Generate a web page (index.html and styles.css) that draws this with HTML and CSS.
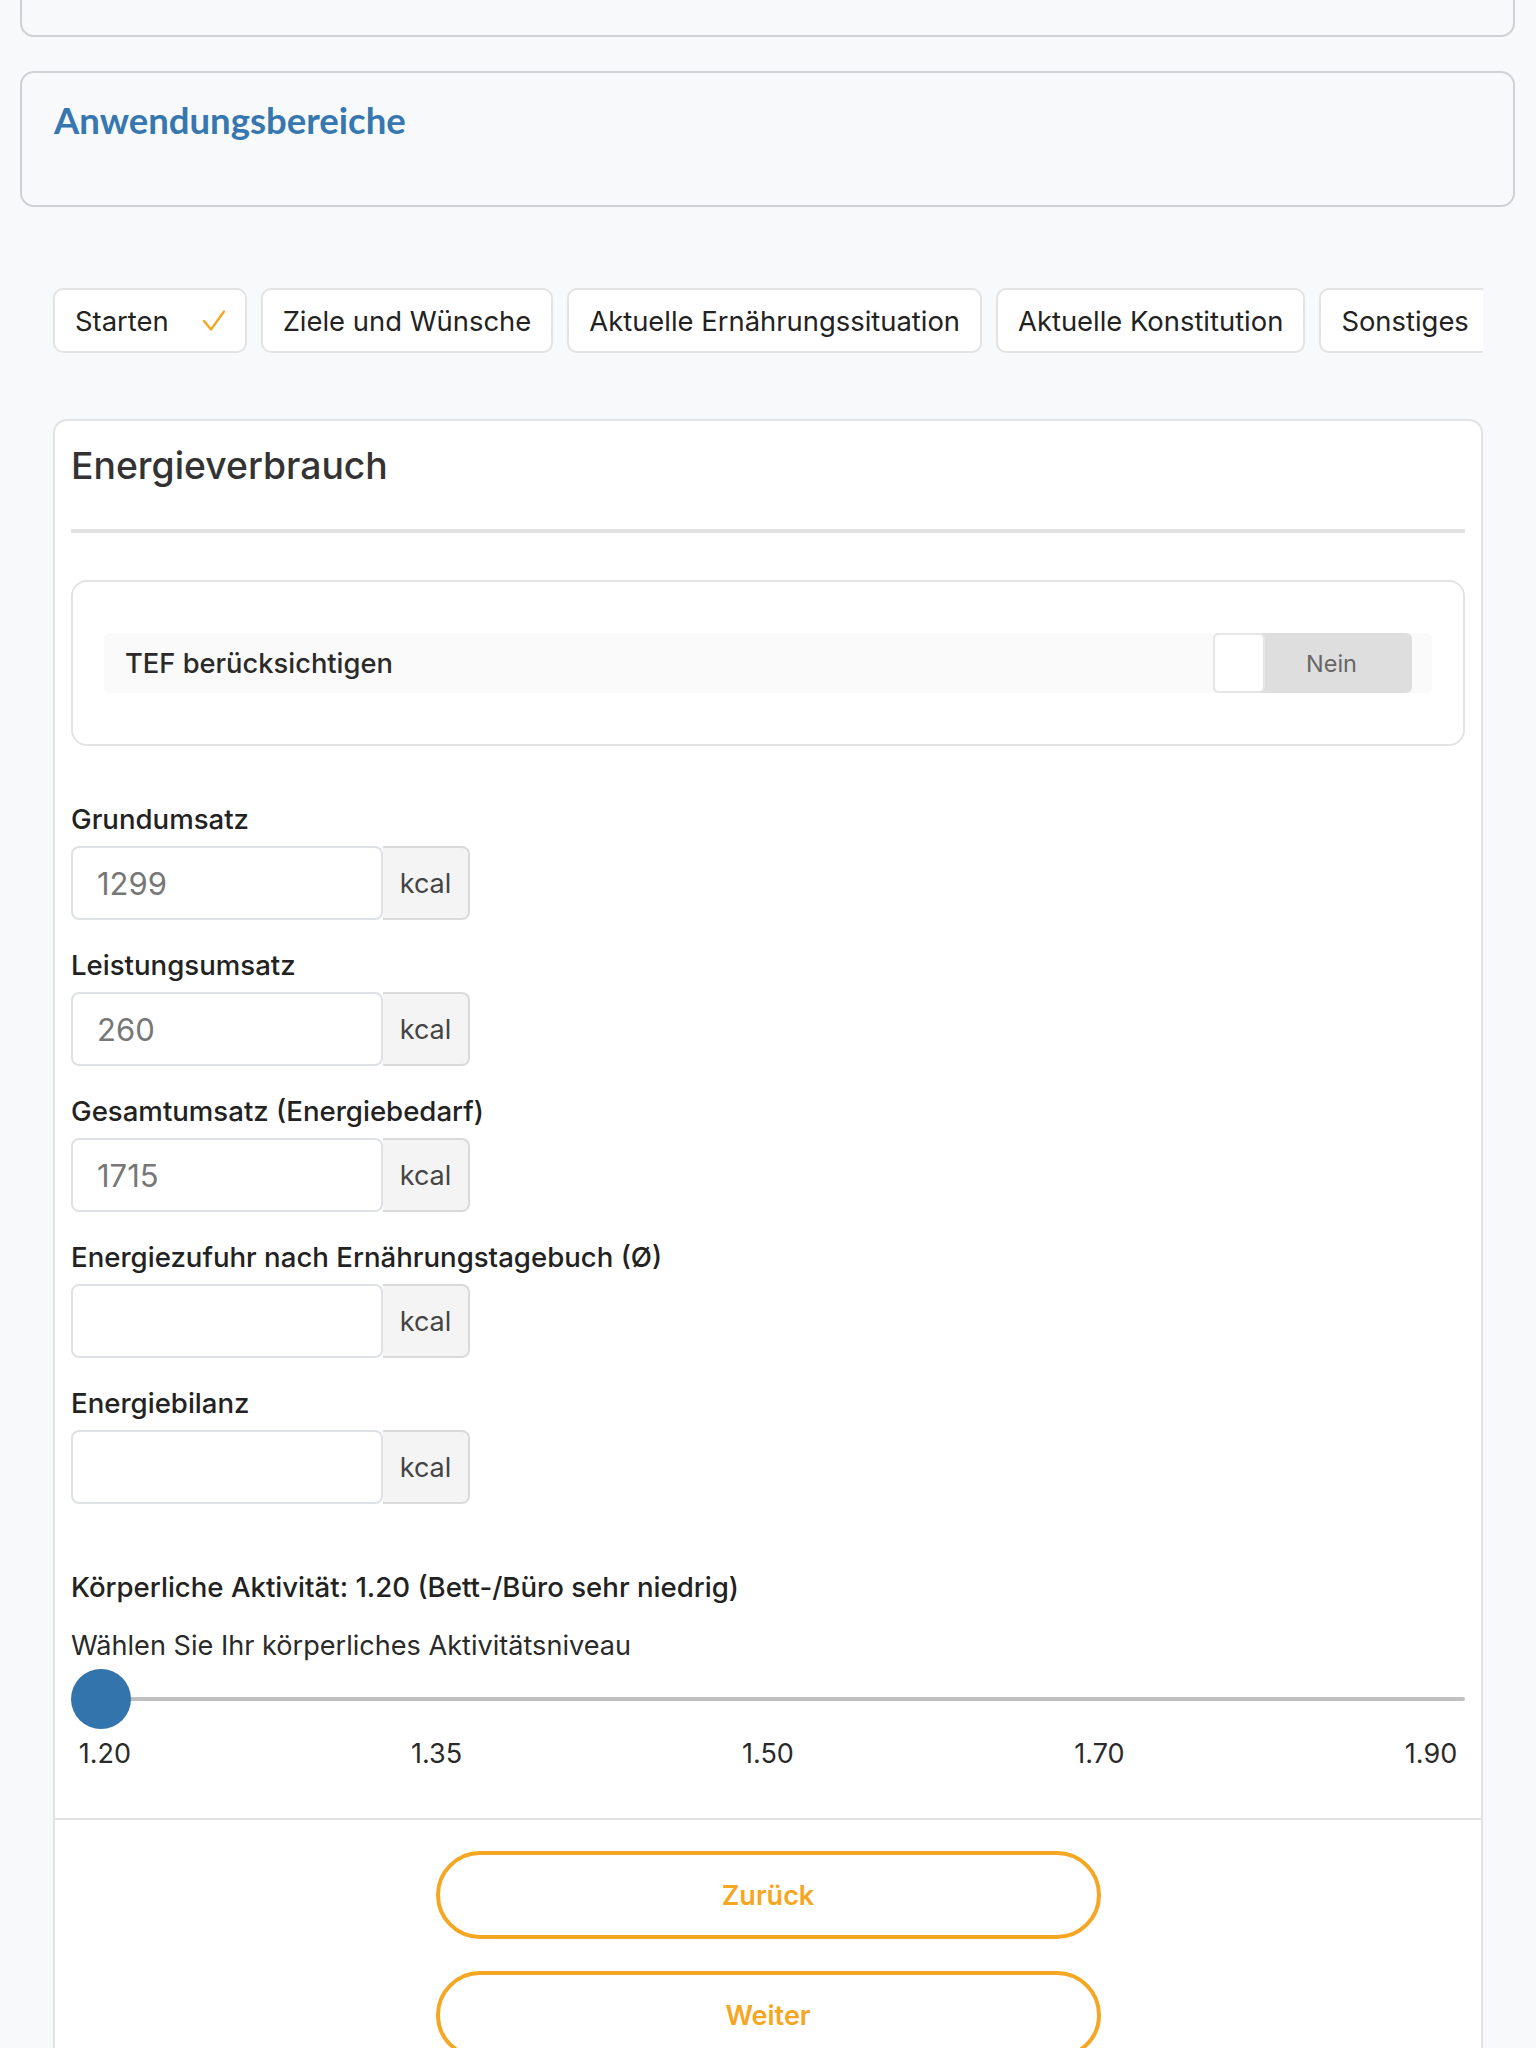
FILE: index.html
```html
<!DOCTYPE html>
<html lang="de">
<head>
    <meta charset="UTF-8">
    <meta name="viewport" content="width=device-width, initial-scale=1.0">
    <title>Ernährungsberatung – Energieverbrauch</title>
    <link rel="stylesheet" href="styles.css">
</head>
<body>
    <div class="page">
        <section class="panel panel-prev"></section>

        <section class="panel panel-areas">
            <h2 class="panel-title">Anwendungsbereiche</h2>
        </section>

        <div class="wizard">
            <nav class="steps">
                <button class="step done">Starten
                    <svg class="check" width="22" height="21" viewBox="0 0 22 21"><polyline points="1,11 8,19.5 21,1.5" fill="none" stroke="#f5a623" stroke-width="2.4" stroke-linecap="round" stroke-linejoin="round"/></svg>
                </button>
                <button class="step">Ziele und Wünsche</button>
                <button class="step">Aktuelle Ernährungssituation</button>
                <button class="step">Aktuelle Konstitution</button>
                <button class="step">Sonstiges</button>
            </nav>

            <div class="step-card">
                <div class="step-body">
                    <h3 class="step-title">Energieverbrauch</h3>

                    <div class="option-box">
                        <div class="option-row">
                            <span class="option-label">TEF berücksichtigen</span>
                            <div class="toggle">
                                <span class="toggle-knob"></span>
                                <span class="toggle-text">Nein</span>
                            </div>
                        </div>
                    </div>

                    <div class="fields">
                        <div class="field">
                            <label for="bmr">Grundumsatz</label>
                            <div class="input-group">
                                <input id="bmr" type="text" value="1299" readonly>
                                <span class="addon">kcal</span>
                            </div>
                        </div>

                        <div class="field">
                            <label for="pal">Leistungsumsatz</label>
                            <div class="input-group">
                                <input id="pal" type="text" value="260" readonly>
                                <span class="addon">kcal</span>
                            </div>
                        </div>

                        <div class="field">
                            <label for="total">Gesamtumsatz (Energiebedarf)</label>
                            <div class="input-group">
                                <input id="total" type="text" value="1715" readonly>
                                <span class="addon">kcal</span>
                            </div>
                        </div>

                        <div class="field">
                            <label for="intake">Energiezufuhr nach Ernährungstagebuch (Ø)</label>
                            <div class="input-group">
                                <input id="intake" type="text">
                                <span class="addon">kcal</span>
                            </div>
                        </div>

                        <div class="field">
                            <label for="balance">Energiebilanz</label>
                            <div class="input-group">
                                <input id="balance" type="text">
                                <span class="addon">kcal</span>
                            </div>
                        </div>
                    </div>

                    <div class="activity">
                        <p class="activity-value">Körperliche Aktivität: 1.20 (Bett-/Büro sehr niedrig)</p>
                        <p class="activity-hint">Wählen Sie Ihr körperliches Aktivitätsniveau</p>
                        <input class="slider" type="range" min="0" max="4" step="1" value="0">
                        <div class="ticks">
                            <span>1.20</span>
                            <span>1.35</span>
                            <span>1.50</span>
                            <span>1.70</span>
                            <span>1.90</span>
                        </div>
                    </div>
                </div>

                <div class="step-footer">
                    <button class="btn-outline">Zurück</button>
                    <button class="btn-outline">Weiter</button>
                </div>
            </div>
        </div>
    </div>
</body>
</html>
```

FILE: styles.css
```css
body {
    margin: 0;
    background: #f8f9fa;
    font-family: Inter, "Liberation Sans", sans-serif;
    color: #222;
}
.page {
    padding: 0 21px 40px 20px;
}

/* collapsible sections above the wizard */
.panel {
    background: #f8f9fa;
    border: 2px solid #cfd1d4;
    border-radius: 14px;
}
.panel-prev {
    height: 98px;
    margin-top: -65px;
}
.panel-areas {
    margin-top: 34px;
    height: 75px;
    padding: 27px 32px 30px;
}
.panel-title {
    margin: 0;
    font-family: Lato, sans-serif;
    font-size: 36.5px;
    line-height: 40px;
    font-weight: 700;
    color: #3777b0;
}

/* wizard */
.wizard {
    margin: 81px 32px 0 33px;
}
.steps {
    display: flex;
    gap: 14px;
    overflow: hidden;
}
.step {
    flex-shrink: 0;
    display: flex;
    align-items: center;
    height: 65px;
    padding: 0 20px;
    background: #fff;
    border: 2px solid #e3e3e3;
    border-radius: 10px;
    font-family: inherit;
    font-size: 27.4px;
    color: #222;
    white-space: nowrap;
}
.step .check {
    margin-left: 34px;
}

.step-card {
    margin-top: 66px;
    background: #fff;
    border: 2px solid #e3e3e3;
    border-radius: 14px;
}
.step-body {
    padding: 22px 16px 44px;
}
.step-title {
    margin: 0 0 47px;
    padding-bottom: 41px;
    border-bottom: 4px solid #e2e2e2;
    font-size: 37.3px;
    line-height: 45px;
    font-weight: 500;
    color: #333;
}

/* TEF switch */
.option-box {
    border: 2px solid #e4e4e4;
    border-radius: 16px;
    padding: 51px 31px;
}
.option-row {
    display: flex;
    justify-content: space-between;
    align-items: center;
    height: 60px;
    padding: 0 20px 0 21px;
    background: #fafafa;
    border-radius: 6px;
}
.option-label {
    font-size: 27.3px;
    font-weight: 500;
    color: #2a2a2a;
}
.toggle {
    display: flex;
    width: 199px;
    height: 60px;
    background: #dedede;
    border-radius: 6px;
}
.toggle-knob {
    width: 52px;
    background: #fff;
    border: 2px solid #e6e6e6;
    border-radius: 6px;
    box-sizing: border-box;
}
.toggle-text {
    flex: 1;
    display: flex;
    align-items: center;
    justify-content: center;
    padding-right: 14px;
    font-size: 23.5px;
    color: #666;
}

/* kcal fields */
.fields {
    margin-top: 53px;
}
.field {
    margin-bottom: 25px;
}
.field label {
    display: block;
    margin-bottom: 7px;
    font-size: 27.6px;
    line-height: 40px;
    font-weight: 500;
    color: #222;
}
.input-group {
    display: flex;
    height: 74px;
}
.input-group input {
    width: 312px;
    height: 74px;
    box-sizing: border-box;
    padding: 0 24px;
    border: 2px solid #dee2e6;
    border-radius: 8px;
    background: #fff;
    font-family: inherit;
    font-size: 31px;
    color: #777;
}
.addon {
    display: flex;
    align-items: center;
    justify-content: center;
    width: 87px;
    box-sizing: border-box;
    background: #f4f4f4;
    border: 2px solid #dadada;
    border-left: 0;
    border-radius: 0 8px 8px 0;
    font-size: 27px;
    color: #444;
}

/* activity slider */
.activity {
    margin-top: 63px;
}
.activity-value {
    margin: 0 0 19px;
    font-size: 27.6px;
    line-height: 40px;
    font-weight: 500;
}
.activity-hint {
    margin: 0;
    font-size: 27.1px;
    line-height: 40px;
    color: #2a2a2a;
}
.slider {
    -webkit-appearance: none;
    appearance: none;
    display: block;
    width: 100%;
    height: 60px;
    margin: 3px 0 0;
    background: transparent;
}
.slider::-webkit-slider-runnable-track {
    height: 4px;
    background: #c0c0c0;
    border-radius: 2px;
}
.slider::-webkit-slider-thumb {
    -webkit-appearance: none;
    width: 60px;
    height: 60px;
    margin-top: -28px;
    border-radius: 50%;
    background: #3474ad;
    border: none;
}
.ticks {
    display: flex;
    justify-content: space-between;
    margin-top: 5px;
}
.ticks span {
    width: 68px;
    text-align: center;
    font-size: 27px;
    line-height: 40px;
    color: #2a2a2a;
}

/* navigation buttons */
.step-footer {
    display: flex;
    flex-direction: column;
    align-items: center;
    gap: 32px;
    padding: 31px 0 40px;
    border-top: 2px solid #e2e2e2;
}
.btn-outline {
    width: 665px;
    height: 88px;
    background: #fff;
    border: 4px solid #f5a623;
    border-radius: 44px;
    font-family: inherit;
    font-size: 27px;
    font-weight: 600;
    color: #f5a623;
    cursor: pointer;
}
```
